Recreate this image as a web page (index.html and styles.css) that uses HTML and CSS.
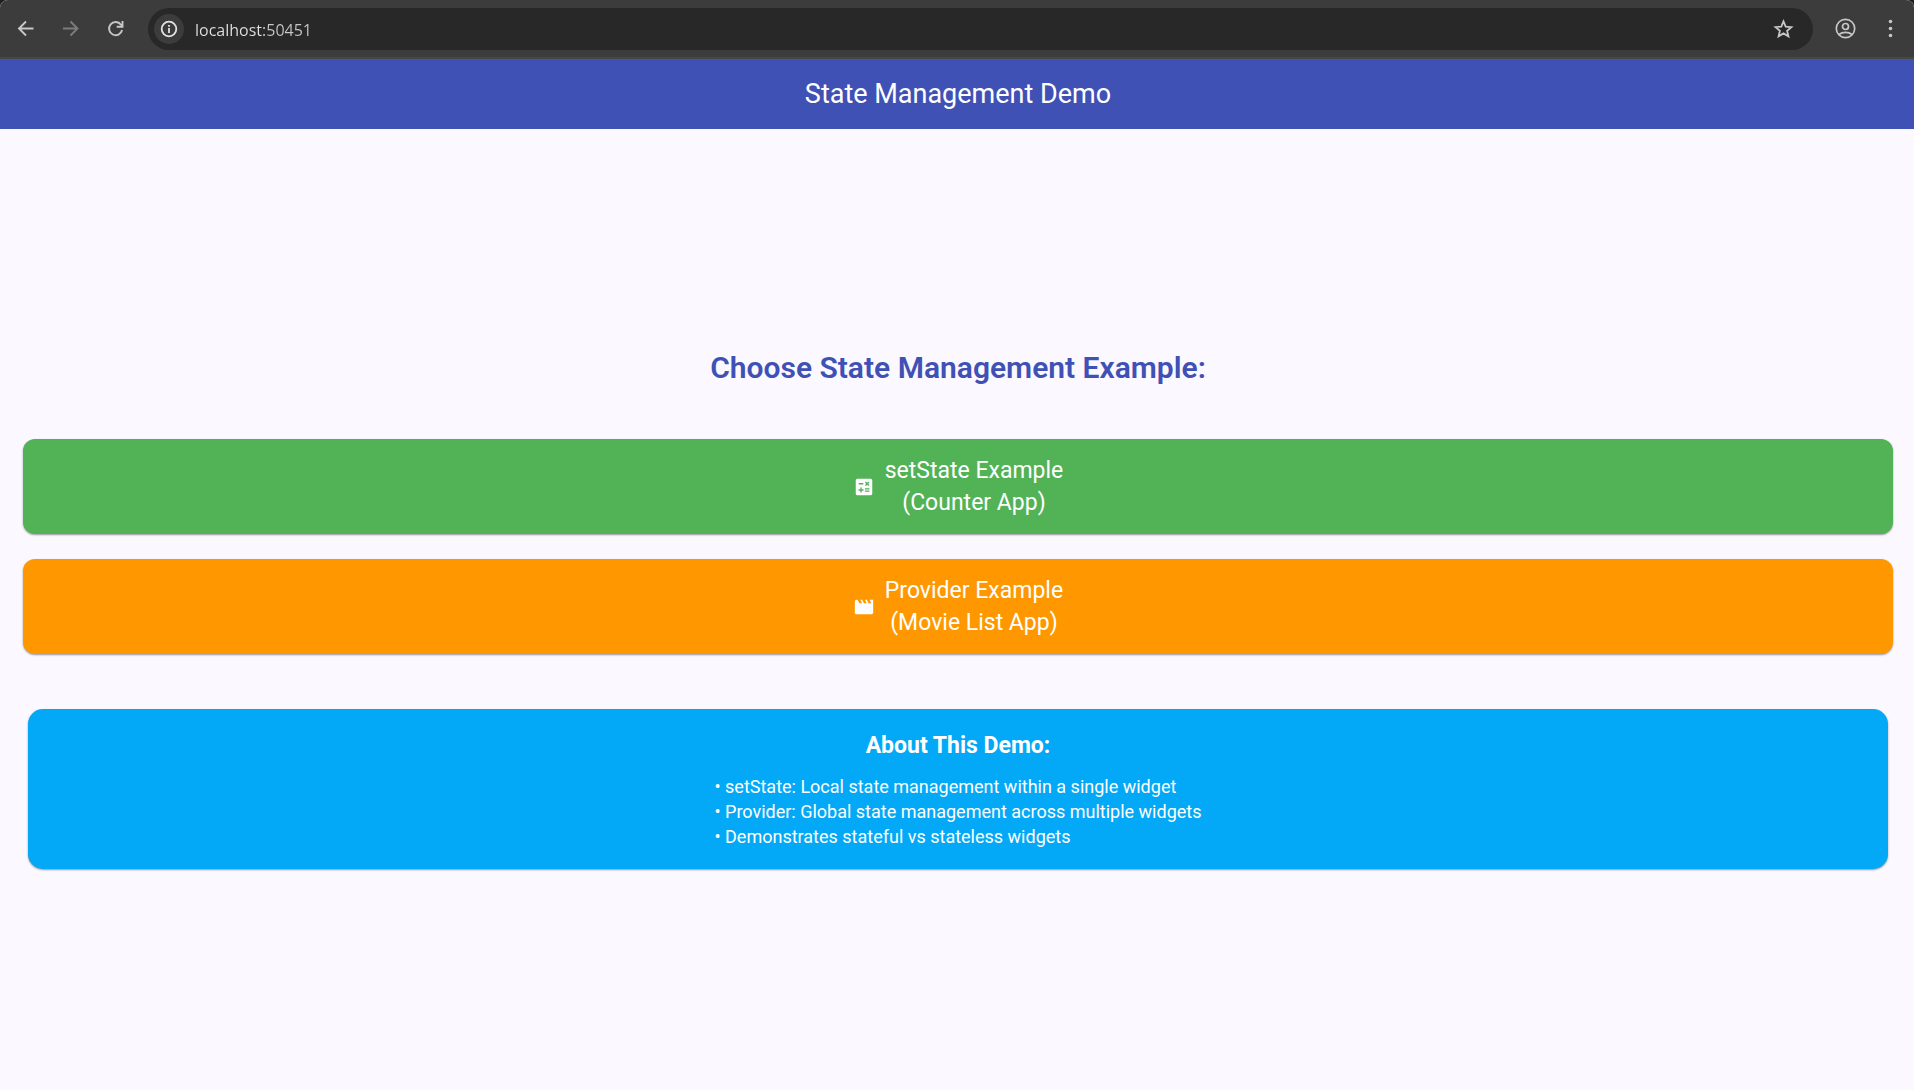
FILE: index.html
```html
<!DOCTYPE html>
<html lang="en">
<head>
<meta charset="utf-8">
<meta name="viewport" content="width=device-width, initial-scale=1">
<title>State Management Demo</title>
<link rel="stylesheet" href="styles.css">
</head>
<body>
<div class="window">
  <nav class="toolbar" aria-label="Browser">
    <div class="toolbar-inner">
      <button class="tool" aria-label="Back">
        <svg width="24" height="24" viewBox="0 0 24 24" fill="none" stroke="currentColor" stroke-width="1.900"><path d="M19.500 11.500H5.500M12 4.500L5 11.500l7 7"/></svg>
      </button>
      <button class="tool tool-off" aria-label="Forward" disabled>
        <svg width="24" height="24" viewBox="0 0 24 24" fill="none" stroke="currentColor" stroke-width="1.900"><path d="M4 11.500H18M11.500 4.500L18.500 11.500l-7 7"/></svg>
      </button>
      <button class="tool" aria-label="Reload">
        <svg width="24" height="24" viewBox="0 0 24 24" fill="none" stroke="currentColor" stroke-width="1.900"><path d="M18.100 13A6.600 6.600 0 1 1 17 7.700L18.500 9.500"/><path d="M18.500 4V9.700H12.700"/></svg>
      </button>
      <div class="omnibox">
        <button class="site-info" aria-label="Site information">
          <svg width="18" height="18" viewBox="0 0 18 18" fill="none" stroke="currentColor" stroke-width="1.800"><circle cx="9" cy="9" r="7.300"/><path d="M9 8v5M9 5v1.800"/></svg>
        </button>
        <input class="url" type="text" value="localhost:50451" aria-label="Address" spellcheck="false">
        <button class="star" aria-label="Bookmark this page">
          <svg width="24" height="24" viewBox="0 0 24 24" fill="none" stroke="currentColor" stroke-width="1.800"><path d="M12.500 4.400l2.200 5.200 5.700.5-4.300 3.700 1.300 5.500-4.900-2.900-4.900 2.900 1.300-5.500-4.300-3.700 5.700-.5z"/></svg>
        </button>
      </div>
      <button class="tool" aria-label="Profile">
        <svg width="24" height="24" viewBox="0 0 24 24" fill="none" stroke="currentColor" stroke-width="1.700"><circle cx="11.500" cy="11.500" r="9.200"/><circle cx="11.500" cy="9.500" r="3"/><path d="M5 17.500c1.800-1.500 4-2.200 6.500-2.200s4.700.7 6.500 2.200"/></svg>
      </button>
      <button class="tool" aria-label="Menu">
        <svg width="24" height="24" viewBox="0 0 24 24" fill="currentColor"><circle cx="11.500" cy="4.500" r="1.800"/><circle cx="11.500" cy="11.500" r="1.800"/><circle cx="11.500" cy="18.500" r="1.800"/></svg>
      </button>
    </div>
  </nav>
  <header class="appbar">
    <h1 class="appbar-title">State Management Demo</h1>
  </header>
  <main class="content">
    <h2 class="prompt">Choose State Management Example:</h2>
    <div class="choices">
      <button class="choice choice-counter">
        <svg width="22" height="22" viewBox="0 0 24 24" fill="currentColor" aria-hidden="true"><path fill-rule="evenodd" d="M19 3H5c-1.100 0-2 .9-2 2v14c0 1.100.9 2 2 2h14c1.100 0 2-.9 2-2V5c0-1.100-.9-2-2-2zM13.030 7.060L14.090 6l1.410 1.410L16.910 6l1.060 1.060-1.410 1.410 1.410 1.410-1.060 1.060-1.410-1.400-1.410 1.410-1.060-1.060 1.410-1.410-1.410-1.420zM6.250 7.720h5v1.500h-5v-1.500zM11.500 16h-2v2H8v-2H6v-1.500h2v-2h1.500v2h2V16zm6.500 1.250h-5v-1.500h5v1.500zm0-2.500h-5v-1.500h5v1.500z"/></svg>
        <span>setState Example<br>(Counter App)</span>
      </button>
      <button class="choice choice-movies">
        <svg width="22" height="22" viewBox="0 0 24 24" fill="currentColor" aria-hidden="true"><path d="M18 4l2 4h-3l-2-4h-2l2 4h-3l-2-4H8l2 4H7L5 4H4c-1.100 0-1.990.9-1.990 2L2 18c0 1.100.9 2 2 2h16c1.100 0 2-.9 2-2V4h-4z"/></svg>
        <span>Provider Example<br>(Movie List App)</span>
      </button>
    </div>
    <section class="about">
      <h3 class="about-title">About This Demo:</h3>
      <ul class="about-list">
        <li>• setState: Local state management within a single widget</li>
        <li>• Provider: Global state management across multiple widgets</li>
        <li>• Demonstrates stateful vs stateless widgets</li>
      </ul>
    </section>
  </main>
</div>
</body>
</html>
```
FILE: styles.css
```css
* {
  box-sizing: border-box;
}

body {
  margin: 0;
  background: #1f1f1f;
  font-family: Roboto, "Liberation Sans", sans-serif;
}

button {
  border: 0;
  padding: 0;
  background: none;
  font: inherit;
  color: inherit;
}

.window {
  display: flex;
  flex-direction: column;
  min-height: 100vh;
  border-radius: 8px 8px 0 0;
  overflow: hidden;
  background: #fbf8ff;
}

/* Browser toolbar */
.toolbar {
  background: #3c3c3c;
  border-bottom: 2px solid #474747;
  color: #c7c7c7;
}

.toolbar-inner {
  display: flex;
  align-items: center;
  padding: 8px 1px 7px 3px;
}

.tool {
  display: flex;
  align-items: center;
  justify-content: center;
  width: 45px;
  height: 42px;
}

.tool-off {
  color: #7c7c7c;
}

.omnibox {
  display: flex;
  flex: 1;
  align-items: center;
  gap: 11px;
  height: 42px;
  margin: 0 10px;
  padding: 0 18px 0 6px;
  border-radius: 21px;
  background: #282828;
}

.site-info {
  display: flex;
  align-items: center;
  justify-content: center;
  width: 30px;
  height: 30px;
  border-radius: 50%;
  background: #3c3c3c;
  color: #e3e3e3;
}

.url {
  flex: 1;
  min-width: 0;
  padding: 2px 0 0;
  border: 0;
  /* host name bright, port dimmed */
  background: linear-gradient(90deg, #e3e3e3 69px, #c7c7c7 69px) text;
  font: 16px/24px "Open Sans", "Noto Sans", sans-serif;
  color: transparent;
  outline: 0;
}

.star {
  display: flex;
}

/* Application */
.appbar {
  display: flex;
  align-items: center;
  justify-content: center;
  height: 70px;
  padding: 0 21px 0 23px;
  background: #3f51b5;
  color: #fff;
}

.appbar-title {
  margin: 0;
  font-size: 27px;
  font-weight: 400;
  line-height: 36px;
}

.content {
  display: flex;
  flex: 1;
  flex-direction: column;
  justify-content: center;
  padding: 0 21px 0 23px;
}

.prompt {
  margin: 0 0 48px;
  font-size: 30px;
  font-weight: 600;
  line-height: 46px;
  text-align: center;
  color: #3f51b5;
}

.choices {
  display: grid;
  gap: 25px;
}

.choice {
  display: flex;
  align-items: center;
  justify-content: center;
  gap: 10px;
  padding: 16px 20px 15px;
  border-radius: 12px;
  box-shadow: 0 1px 2px rgba(0, 0, 0, 0.4);
  font-size: 23px;
  line-height: 32px;
  color: #fff;
}

.choice-counter {
  background: #52b256;
}

.choice-movies {
  background: #ff9800;
}

.about {
  display: flex;
  flex-direction: column;
  align-items: center;
  margin: 55px 5px 5px;
  padding: 20px;
  border-radius: 15px;
  box-shadow: 0 1px 2px rgba(0, 0, 0, 0.4);
  background: #03a9f6;
  color: #fff;
}

.about-title {
  margin: 0 0 11px;
  font-size: 23px;
  font-weight: 700;
  line-height: 34px;
}

.about-list {
  margin: 0;
  padding: 0;
  list-style: none;
  font-size: 18px;
  line-height: 25px;
}
```
